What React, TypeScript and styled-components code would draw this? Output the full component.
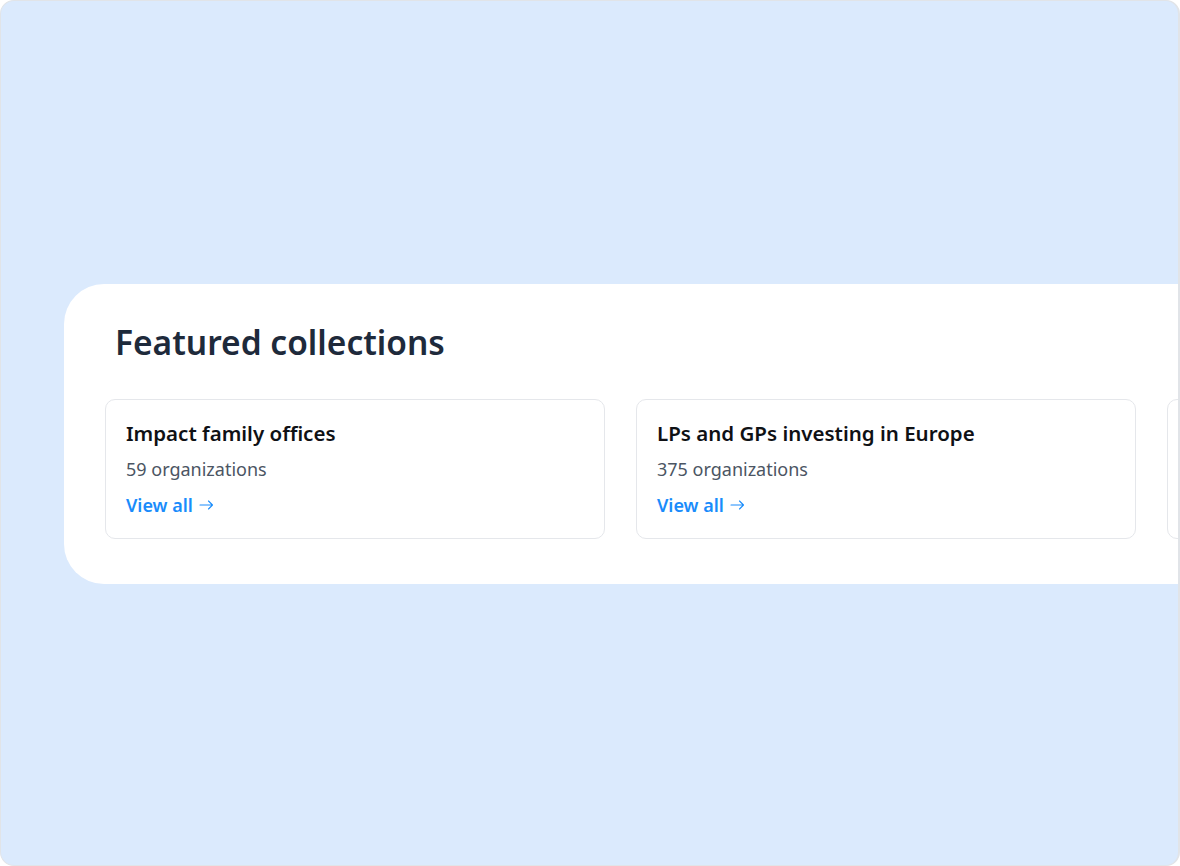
import React from 'react'
import styled, { createGlobalStyle } from 'styled-components'

const Global = createGlobalStyle`
  html, body {
    margin: 0;
    padding: 0;
    background: #ffffff;
  }
  body {
    font-family: 'Noto Sans', 'Open Sans', sans-serif;
  }
`

const Frame = styled.div`
  box-sizing: border-box;
  width: 1180px;
  height: 866px;
  background: #dbeafd;
  border: 1px solid #e1e4e8;
  border-right-width: 2px;
  border-radius: 14px;
  overflow: hidden;
  display: flex;
  align-items: center;
  padding-left: 63px;
`

const Panel = styled.section`
  box-sizing: border-box;
  flex: 0 0 1260px;
  height: 300px;
  margin-top: 1px;
  background: #ffffff;
  border-radius: 40px;
  padding: 36px 0 0 41px;
`

const Heading = styled.h2`
  margin: 0 0 35px 10px;
  font-size: 33.5px;
  line-height: 44px;
  font-weight: 600;
  color: #1e2a3b;
`

const Row = styled.div`
  display: flex;
  gap: 31px;
`

const Card = styled.div`
  box-sizing: border-box;
  flex: 0 0 500px;
  height: 140px;
  border: 1px solid #e5e7eb;
  border-radius: 10px;
  padding: 19px 20px 0;
  display: flex;
  flex-direction: column;
`

const Title = styled.div`
  font-size: 20.5px;
  line-height: 28px;
  font-weight: 600;
  color: #0f1115;
`

const Count = styled.div`
  margin-top: 10px;
  font-size: 18px;
  line-height: 24px;
  color: #4b5563;
`

const ViewAll = styled.a`
  margin-top: 12px;
  display: inline-flex;
  align-items: center;
  gap: 6px;
  font-size: 18px;
  line-height: 24px;
  font-weight: 600;
  color: #1a8cfb;
  text-decoration: none;
  cursor: pointer;
`

const Arrow = () => (
  <svg width="15" height="10" viewBox="0 0 15 10" fill="none">
    <path d="M1 5h12.5M9.5 1l4 4-4 4" stroke="#1a8cfb" strokeWidth="1.1" strokeLinecap="round" strokeLinejoin="round" />
  </svg>
)

const collections = [
  { name: 'Impact family offices', count: 59 },
  { name: 'LPs and GPs investing in Europe', count: 375 },
  { name: 'Climate tech investors', count: 212 },
]

export default function App() {
  return (
    <>
      <Global />
      <Frame>
        <Panel>
          <Heading>Featured collections</Heading>
          <Row>
            {collections.map((c) => (
              <Card key={c.name}>
                <Title>{c.name}</Title>
                <Count>{c.count} organizations</Count>
                <div>
                  <ViewAll>
                    View all <Arrow />
                  </ViewAll>
                </div>
              </Card>
            ))}
          </Row>
        </Panel>
      </Frame>
    </>
  )
}
